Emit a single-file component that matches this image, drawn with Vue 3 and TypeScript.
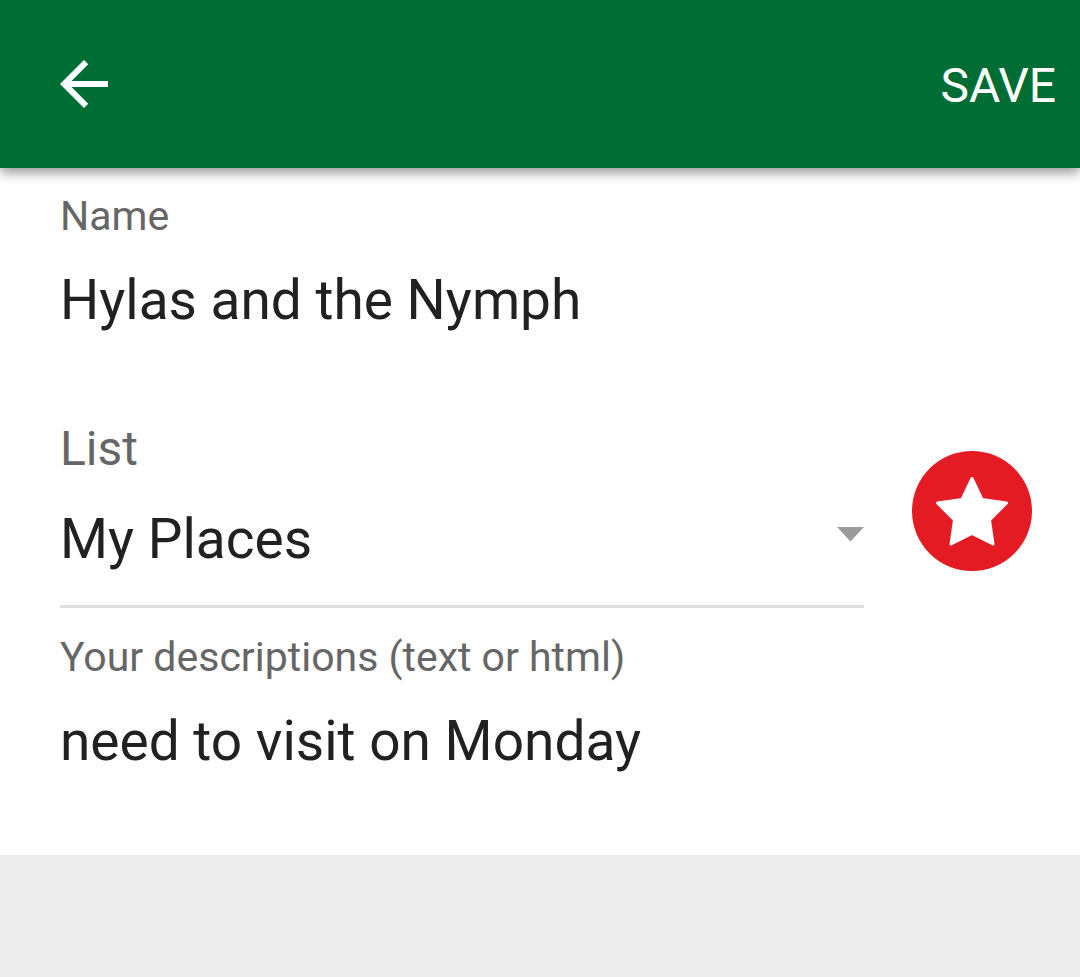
<script setup lang="ts">
import { ref } from 'vue'

const name = ref('Hylas and the Nymph')
const list = ref('My Places')
const description = ref('need to visit on Monday')
</script>

<template>
  <div class="page">
    <header class="bar">
      <button class="back" type="button" aria-label="Back">
        <svg viewBox="0 0 48 48" width="48" height="48" aria-hidden="true">
          <path d="M48 21H11.5L28.2 4.2 24 0 0 24l24 24 4.2-4.2L11.5 27H48z" fill="#fff" />
        </svg>
      </button>
      <button class="save" type="button">SAVE</button>
    </header>
    <main class="form">
      <div class="field">
        <label class="caption" for="name">Name</label>
        <input id="name" v-model="name" class="value" type="text" />
      </div>
      <div class="row">
        <div class="picker">
          <label class="list-label" for="list">List</label>
          <div class="select-box">
            <select id="list" v-model="list" class="value">
              <option>My Places</option>
            </select>
            <svg class="arrow" viewBox="0 0 28 16" width="28" height="16" aria-hidden="true">
              <path d="M1 1h27L14.500 15.500z" fill="#9b9b9b" />
            </svg>
          </div>
        </div>
        <button class="marker" type="button" aria-label="Marker icon and colour">
          <svg viewBox="0 0 120 120" width="120" height="120" aria-hidden="true">
            <circle cx="60" cy="60" r="60" fill="#e51b23" />
            <path
              d="M60 27.500L50 48.500 25.500 52 42.500 69 39 93 60 82.500 81 93 77.500 69 94.500 52 70 48.500z"
              fill="#fff"
              stroke="#fff"
              stroke-width="3"
              stroke-linejoin="round"
            />
          </svg>
        </button>
      </div>
      <div class="field">
        <label class="caption" for="description">Your descriptions (text or html)</label>
        <input id="description" v-model="description" class="value" type="text" />
      </div>
    </main>
  </div>
</template>

<style>
body {
  margin: 0;
  background: #ededed;
}
</style>

<style scoped>
.page {
  font-family: Roboto, "Liberation Sans", sans-serif;
}
button,
input,
select {
  margin: 0;
  padding: 0;
  border: 0;
  background: none;
  font: inherit;
  color: inherit;
  border-radius: 0;
}
.bar {
  position: relative;
  display: flex;
  align-items: center;
  justify-content: space-between;
  height: 168px;
  padding: 0 24px 0 60px;
  box-sizing: border-box;
  background: #006d35;
  box-shadow: 0 4px 12px rgba(0, 0, 0, 0.45);
  color: #fff;
}
svg {
  display: block;
}
.save {
  padding-top: 4px;
  font-size: 48px;
  line-height: 56px;
}
.form {
  padding: 24px 48px 78px 60px;
  background: #fff;
}
.field {
  display: flex;
  flex-direction: column;
  gap: 24px;
}
.caption {
  font-size: 41px;
  line-height: 48px;
  color: #666;
}
.value {
  display: block;
  width: 100%;
  height: 72px;
  font-size: 55px;
  line-height: 72px;
  color: #212121;
  appearance: none;
}
.row {
  display: flex;
  align-items: center;
  gap: 48px;
  padding: 83px 0 25px;
}
.picker {
  flex: 1;
  border-bottom: 3px solid #dedede;
}
.list-label {
  display: block;
  font-size: 48px;
  line-height: 60px;
  color: #666;
}
.select-box {
  position: relative;
  padding: 24px 0 30px;
}
.marker {
  margin-bottom: 6px;
}
.arrow {
  position: absolute;
  right: 0;
  top: 47px;
}
</style>
